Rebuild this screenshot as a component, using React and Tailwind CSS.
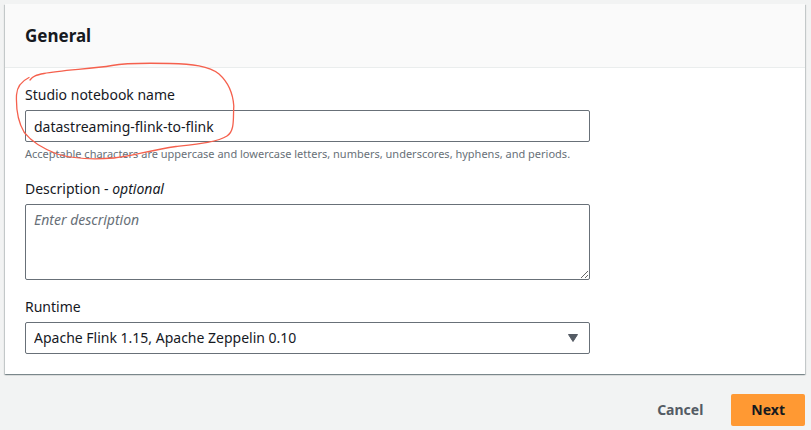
import React from 'react';

const controlClass =
  'block w-full rounded-xs border border-[#687078] bg-white px-2 text-sm text-[#16191f] outline-none focus:border-[#00a1c9]';

function Field({ id, label, optional, hint, children }) {
  return (
    <div>
      <label htmlFor={id} className="mb-1 block text-sm/[22px] text-[#16191f]">
        {label}
        {optional && (
          <>
            {' - '}
            <i>optional</i>
          </>
        )}
      </label>
      {children}
      {hint && (
        <p id={`${id}-hint`} className="mt-1 text-[11px]/4 text-[#687078]">
          {hint}
        </p>
      )}
    </div>
  );
}

function HandDrawnRing() {
  return (
    <svg
      className="pointer-events-none absolute -top-2 left-[9px] h-[100px] w-[222px]"
      viewBox="14 60 222 100"
      fill="none"
      stroke="#f5604d"
      strokeWidth="1.3"
      strokeLinecap="round"
      aria-hidden="true"
    >
      <path d="M29 77.500C22 81 17 86 16.500 95C16 108 18 122 24 132C32 143 44 149 57 154C72 158.500 95 159.500 114 158C134 156 150 150 176 146.500C198 144 218 142 227 136C235 131 233 118 233.800 106C233 94 229 83 219 74C209 66 192 64 170 63.500C150 63 128 62.500 112 65.500C92 69 62 70 44 73.500C36 75 33 76 30 80" />
    </svg>
  );
}

export default function App() {
  return (
    <div className="min-h-screen bg-[#f2f3f3] py-1 pr-[6px] pl-[5px] font-['Noto_Sans','Open_Sans',sans-serif] text-[#16191f]">
      <form onSubmit={(event) => event.preventDefault()}>
        <section className="bg-white shadow-[0_1px_1px_0_rgba(0,28,36,0.3),1px_1px_1px_0_rgba(0,28,36,0.15),-1px_1px_1px_0_rgba(0,28,36,0.15)]">
          <header className="border-b border-[#eaeded] bg-[#fafafa] px-5 py-4">
            <h2 className="text-[17px]/[31px] font-bold">General</h2>
          </header>
          <div className="relative px-5 pt-4 pb-5">
            <div className="flex max-w-[565px] flex-col gap-4">
              <Field
                id="notebook-name"
                label="Studio notebook name"
                hint="Acceptable characters are uppercase and lowercase letters, numbers, underscores, hyphens, and periods."
              >
                <input
                  id="notebook-name"
                  type="text"
                  defaultValue="datastreaming-flink-to-flink"
                  aria-describedby="notebook-name-hint"
                  className={`${controlClass} h-8`}
                />
              </Field>
              <Field id="description" label="Description" optional>
                <textarea
                  id="description"
                  placeholder="Enter description"
                  className={`${controlClass} h-[76px] resize py-1 leading-[22px] placeholder:text-[#687078] placeholder:italic`}
                />
              </Field>
              <Field id="runtime" label="Runtime">
                <div className="relative">
                  <select id="runtime" className={`${controlClass} h-8 appearance-none pr-8`}>
                    <option>Apache Flink 1.15, Apache Zeppelin 0.10</option>
                  </select>
                  <svg
                    className="pointer-events-none absolute top-3 right-3 h-2 w-[10px]"
                    viewBox="0 0 10 8"
                    fill="#545b64"
                    stroke="#545b64"
                    strokeLinejoin="round"
                    aria-hidden="true"
                  >
                    <path d="M.5.5h9L5 7.500Z" />
                  </svg>
                </div>
              </Field>
            </div>
            <HandDrawnRing />
          </div>
        </section>
        <div className="mt-5 flex justify-end gap-2">
          <button type="button" className="h-8 rounded-xs px-5 text-sm font-bold text-[#545b64]">
            Cancel
          </button>
          <button type="submit" className="h-8 rounded-xs bg-[#ff9933] px-5 text-sm font-bold text-[#16191f]">
            Next
          </button>
        </div>
      </form>
    </div>
  );
}
